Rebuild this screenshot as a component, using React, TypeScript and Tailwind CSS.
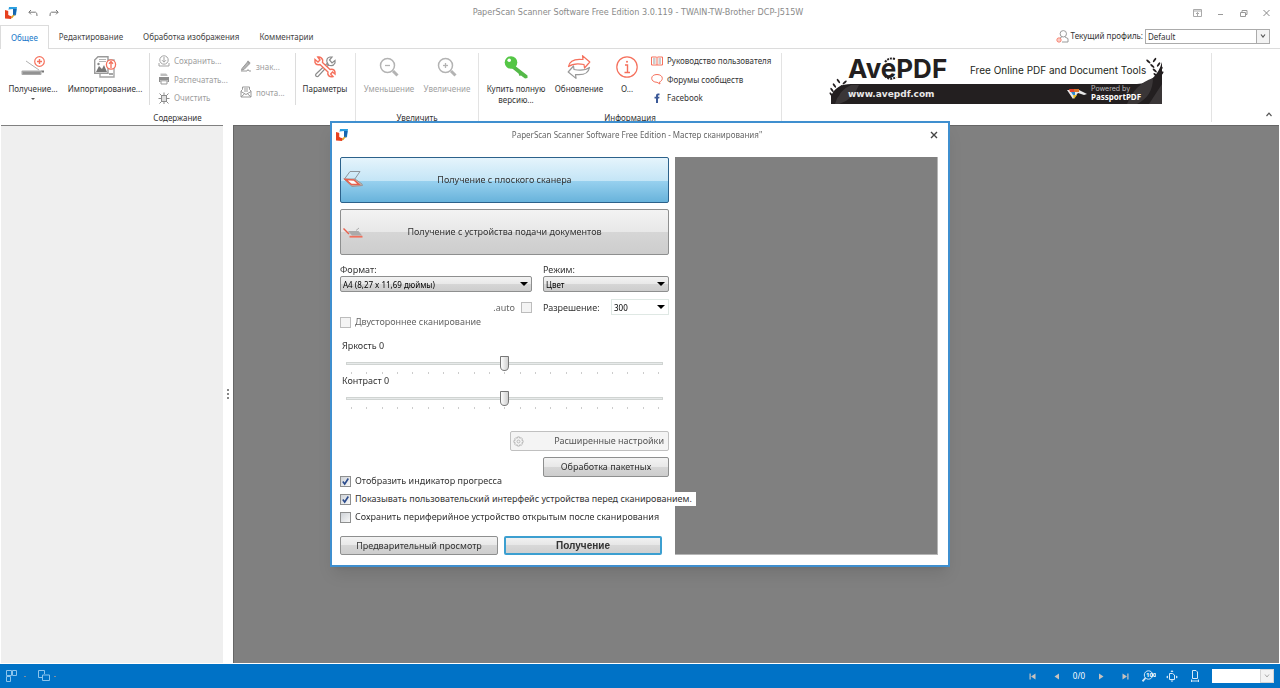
import { useState, type ReactNode } from 'react'
import clsx from 'clsx'

const tabs = ['Общее', 'Редактирование', 'Обработка изображения', 'Комментарии']

function AppLogo() {
  return (
    <svg className="size-3 shrink-0" viewBox="0 0 24 24">
      <path d="M8 0H24L22 16H17V6H7Z" fill="#2b9fe0" />
      <path d="M16 4H23L21 17H16Z" fill="#1565b0" />
      <path d="M14 17L20 15L15 22L11 23Z" fill="#d9a928" />
      <path d="M0 6L7 8V16L13 18L12 24L0 23Z" fill="#e6401f" />
      <path d="M7 5L16 4L15 15L12 18L7 16Z" fill="#fff" />
    </svg>
  )
}

function BigButton({ icon, label, disabled, arrow, className }: {
  icon: ReactNode
  label: ReactNode
  disabled?: boolean
  arrow?: boolean
  className?: string
}) {
  return (
    <button
      disabled={disabled}
      className={clsx('flex flex-col items-center gap-1 pt-[2px] text-center leading-[11px]', disabled && 'text-[#a0a0a0]', className)}
    >
      {icon}
      <span className="whitespace-nowrap">{label}</span>
      {arrow && <span className="h-0 w-0 border-x-2 border-t-2 border-x-transparent border-t-[#555]" />}
    </button>
  )
}

function SmallButton({ icon, label, disabled }: { icon: ReactNode; label: string; disabled?: boolean }) {
  return (
    <button
      disabled={disabled}
      className={clsx('flex h-[13px] items-center gap-1 whitespace-nowrap leading-[11px]', disabled && 'text-[#a0a0a0]')}
    >
      {icon}
      {label}
    </button>
  )
}

function Group({ title, width, children }: { title?: string; width: string; children?: ReactNode }) {
  return (
    <section className={clsx('flex shrink-0 flex-col justify-between border-r border-[#e3e3e3]', width)}>
      <div className="flex">{children}</div>
      {title && <h2 className="text-center leading-[8px]">{title}</h2>}
    </section>
  )
}

// Ribbon icons

const ScanIcon = () => (
  <svg className="h-6 w-6" viewBox="0 0 24 24" fill="none">
    <path d="M5 6L18 15" stroke="#b0b0b0" />
    <rect x="0.5" y="15.5" width="20" height="4.5" rx="1" fill="#a8a8a8" />
    <path d="M2 18H19" stroke="#7d7d7d" />
    <path d="M20 15.5H23V17.5H21Z" fill="#777" />
    <circle cx="18.5" cy="6.5" r="4.8" fill="#fff" stroke="#f5705c" strokeWidth="1.2" />
    <path d="M16 6.5H21M18.5 4V9" stroke="#f5705c" strokeWidth="1.4" />
  </svg>
)

const ImportIcon = () => (
  <svg className="h-6 w-6" viewBox="0 0 24 24" fill="none">
    <path d="M15 5H21V22H7V19" stroke="#a5a5a5" strokeWidth="1.4" />
    <path d="M16 20H20V18H16Z" fill="#a5a5a5" />
    <path d="M1.7 5L5 1.7H15V18.3H1.7Z" fill="#fff" stroke="#9a9a9a" strokeWidth="1.4" />
    <path d="M6 4.5H13M6 6.5H13" stroke="#b5b5b5" />
    <path d="M3 17L6 11L9 14L11 10L14 17Z" fill="#777" />
    <circle cx="5.5" cy="9" r="1.2" fill="#888" />
    <circle cx="18" cy="9.5" r="4.6" fill="#fff" stroke="#f5705c" strokeWidth="1.3" />
    <path d="M18 13V6.5M16 8.7L18 6.5L20 8.7" stroke="#f5705c" strokeWidth="1.3" />
  </svg>
)

const SaveIcon = () => (
  <svg className="h-3 w-3" viewBox="0 0 12 12" fill="none" stroke="#a3a3a3">
    <circle cx="6" cy="5" r="4.2" />
    <path d="M6 2V7M4 5.2L6 7.2L8 5.2M1 8V11H11V8" />
  </svg>
)

const PrintIcon = () => (
  <svg className="h-3 w-3" viewBox="0 0 12 12">
    <path d="M2.5 0.5H8L9.5 2V3H2.5Z" fill="#bdbdbd" />
    <path d="M1 4H11V9H9.5V7H2.5V9H1Z" fill="#8d8d8d" />
    <path d="M3 7.8H9V11H3Z" fill="none" stroke="#999" />
  </svg>
)

const ClearIcon = () => (
  <svg className="h-3 w-3" viewBox="0 0 12 12" fill="none" stroke="#8d8d8d">
    <rect x="3.5" y="3.5" width="5" height="6" fill="#ddd" />
    <path d="M6 0.5V3M1.5 1.5L3.2 3.2M10.5 1.5L8.8 3.2M0.5 6.5H3M9 6.5H11.5M1.5 11.5L3.2 9.8M10.5 11.5L8.8 9.8M6 10V12" />
  </svg>
)

const SignIcon = () => (
  <svg className="h-3 w-3" viewBox="0 0 12 12" fill="none" stroke="#9a9a9a">
    <path d="M2 8.5L7.5 2L9.5 3.8L4 9.5L1.5 10.2Z" fill="#b5b5b5" />
    <path d="M7.5 1L10 3.5" strokeWidth="1.6" />
    <path d="M1 11H7L8 9.5L9 11H11" />
  </svg>
)

const MailIcon = () => (
  <svg className="h-3 w-3" viewBox="0 0 12 12" fill="none" stroke="#999">
    <path d="M1 5L2.5 3.5V1H9.5V3.5L11 5V11H1Z" />
    <path d="M1 5.5L6 8.5L11 5.5M1 11L4.5 7.8M11 11L7.5 7.8M4 3H8M4 5H8" />
  </svg>
)

const ToolsIcon = () => (
  <svg className="h-6 w-6" viewBox="0 0 24 24" fill="none" strokeWidth="1.2">
    <path d="M3 19L14 8.5L15.5 10L5 21.5Q3 22 2.5 20Z" fill="#fff" stroke="#8c8c8c" />
    <path d="M14 7Q13 3 17 2H19L16.5 5L19 8L22 5.5V8Q20 12 15.5 10Z" fill="#fff" stroke="#8c8c8c" />
    <path d="M2 4.5L5 7L7 5L4.8 2Q8.5 1.5 9.7 5L9.5 7.5L17 14.5Q21 13.5 22 17V19L19.5 17L17.7 19L20 21.5Q16 22.5 14.8 19L15 17L7 9.5Q3 10.5 2 7.5Z" fill="#fff" stroke="#f5705c" strokeWidth="1.4" />
  </svg>
)

const ZoomIcon = ({ plus }: { plus?: boolean }) => (
  <svg className="h-6 w-6" viewBox="0 0 24 24" fill="none" stroke="#b3b3b3">
    <circle cx="10.5" cy="10.5" r="7" strokeWidth="1.5" />
    <path d="M8 10.5H13" strokeWidth="1.3" />
    {plus && <path d="M10.5 8V13" strokeWidth="1.3" />}
    <path d="M16 16L20.5 20.5" strokeWidth="3" />
  </svg>
)

const KeyIcon = () => (
  <svg className="h-6 w-6" viewBox="0 0 24 24">
    <path d="M10 10L23.5 20.5V23L21 23.5L17 20.5L15.5 21L14.5 18.5L7 12.5Z" fill="#54b948" />
    <circle cx="7" cy="7.5" r="6.3" fill="#54c645" />
    <circle cx="5.2" cy="5.2" r="1.8" fill="#fff" />
  </svg>
)

const UpdateIcon = () => (
  <svg className="h-6 w-6" viewBox="0 0 24 24" fill="none" strokeWidth="1.2" strokeLinejoin="round">
    <path d="M1.5 11.5Q3 3 16 4.5L15.5 0.7L22.8 7L17.5 13L17 9.5Q7 7.5 1.5 11.5Z" stroke="#f5705c" />
    <path d="M22.5 12.5Q21 21 8.5 19.5L9 23.4L1.2 17L6.5 11L7 14.5Q17 16.5 22.5 12.5Z" stroke="#999" />
  </svg>
)

const InfoIcon = () => (
  <svg className="h-6 w-6" viewBox="0 0 24 24" fill="none" stroke="#f5705c">
    <circle cx="12" cy="12" r="10.2" strokeWidth="1.2" />
    <path d="M10 10H12.5V17.5M9.5 17.5H15" strokeWidth="1.4" />
    <circle cx="12" cy="6.8" r="1" fill="#f5705c" stroke="none" />
  </svg>
)

const BookIcon = () => (
  <svg className="h-3 w-3" viewBox="0 0 12 12" fill="none">
    <path d="M0.5 2H5.5L6 2.5L6.5 2H11.5V10H0.5Z" fill="#fff" stroke="#f5705c" />
    <path d="M6 2.5V10" stroke="#f5705c" />
    <path d="M2 4H4.5M2 6H4.5M2 8H4.5M7.5 4H10M7.5 6H10M7.5 8H10" stroke="#999" />
  </svg>
)

const ForumIcon = () => (
  <svg className="h-3 w-3" viewBox="0 0 12 12" fill="none" stroke="#f5705c">
    <path d="M6 1.5C9.2 1.5 11.3 3.2 11.3 5.3S9.5 8.7 8.5 9L9 11L6 9.3C2.8 9.3 0.7 7.5 0.7 5.3S2.8 1.5 6 1.5Z" />
  </svg>
)

const FacebookIcon = () => (
  <svg className="h-3 w-3" viewBox="0 0 12 12">
    <path d="M5 11V6.6H3.5V4.8H5V3.6Q5 1.5 7 1.5H8.5V3.2H7.6Q7 3.2 7 3.9V4.8H8.5L8.2 6.6H7V11Z" fill="#3b5998" />
  </svg>
)

const ProfileIcon = () => (
  <svg className="h-[13px] w-[13px] shrink-0" viewBox="0 0 13 13" fill="none">
    <circle cx="7.3" cy="3.8" r="3.2" stroke="#9a9a9a" />
    <path d="M5.8 7L4 8M9 7L12 8.6V12H6" stroke="#9a9a9a" />
    <circle cx="3" cy="10" r="2.1" stroke="#f5705c" />
    <circle cx="3" cy="10" r="0.7" fill="#f5705c" />
  </svg>
)

function Leaves({ x, y, fill, flip }: { x: number; y: number; fill: string; flip?: boolean }) {
  return (
    <g transform={`translate(${x} ${y}) scale(${flip ? -1 : 1} 1)`} fill={fill}>
      {[0, 1, 2, 3].map((i) => (
        <g key={i} transform={`translate(${i * i * 0.8} ${-i * 4.5})`}>
          <ellipse cx="-2" cy="-2" rx="1" ry="2.6" transform="rotate(-35)" />
          <ellipse cx="3" cy="-2" rx="1" ry="2.6" transform="rotate(50)" />
        </g>
      ))}
    </g>
  )
}

function Banner() {
  return (
    <a href="#avepdf" className="mt-px block h-[50px] w-[331px]" aria-label="AvePDF">
      <svg className="h-full w-full overflow-visible" viewBox="0 0 331 50">
        <path d="M0 50V42Q5 30 20 30H306Q325 29 331 8V50Z" fill="#231f20" />
        <path d="M4 50Q8 36 20 31H28Q22 46 8 50ZM296 50Q304 30 322 24Q322 42 306 50ZM318 50L331 30V50Z" fill="#3a3637" />
        <Leaves x={3} y={41} fill="#231f20" />
        <Leaves x={328} y={20} fill="#231f20" flip />
        <text x="17" y="24" className="font-['Inter'] text-[26px] font-bold" fill="#231f20">AvePDF</text>
        <path d="M54 8Q58 3 64 5M54 22Q59 27 65 23" fill="none" stroke="#231f20" strokeWidth="2" strokeDasharray="2 1" />
        <text x="139" y="20" className="font-['Inter'] text-[10px]" fill="#231f20">Free Online PDF and Document Tools</text>
        <text x="17" y="43" className="font-['DejaVu_Sans'] text-[9px] font-bold" fill="#e8e8e8">www.avepdf.com</text>
        <path d="M236 36H248L256 40L253 41L247 39L242 45Z" fill="#e8e8e8" />
        <path d="M238 35H243V38H239Z" fill="#e6402b" />
        <path d="M243 35H248V38H243Z" fill="#d9732b" />
        <path d="M240 38H244V41H242Z" fill="#2f8bd0" />
        <path d="M242 41H246L243 45Z" fill="#e8c22b" />
        <text x="260" y="37" className="font-['Inter'] text-[7px]" fill="#bdbdbd">Powered by</text>
        <text x="260" y="46" className="font-['Noto_Sans'] text-[8px] font-bold" fill="#fff">PassportPDF</text>
      </svg>
    </a>
  )
}

function TitleBar() {
  return (
    <header className="flex h-[25px] items-center px-[5px] text-[#777]">
      <div className="flex flex-1 items-center gap-[11px]">
        <AppLogo />
        <button aria-label="Отменить">
          <svg className="h-[10px] w-[10px]" viewBox="0 0 10 10" fill="none" stroke="#777">
            <path d="M3 2L0.8 4.2L3 6.4M1 4.2H7.5Q9.3 4.5 9 8" />
          </svg>
        </button>
        <button aria-label="Повторить">
          <svg className="h-[10px] w-[10px]" viewBox="0 0 10 10" fill="none" stroke="#777">
            <path d="M7 2L9.2 4.2L7 6.4M9 4.2H2.5Q0.7 4.5 1 8" />
          </svg>
        </button>
      </div>
      <h1 className="font-['DejaVu_Sans_Condensed','Noto_Sans',sans-serif] text-[9px] text-[#8a8a8a]">
        PaperScan Scanner Software Free Edition 3.0.119 - TWAIN-TW-Brother DCP-J515W
      </h1>
      <div className="flex flex-1 items-center justify-end gap-[14px] pr-1">
        <button aria-label="Лента">
          <svg className="h-2 w-[9px]" viewBox="0 0 9 8" fill="none" stroke="#aaa">
            <path d="M0.5 0.5H8.5V7.5H0.5ZM0.5 2H8.5M4.5 7V3.5M3 5L4.5 3.5L6 5" />
          </svg>
        </button>
        <button aria-label="Свернуть">
          <svg className="h-2 w-[9px]" viewBox="0 0 9 8" stroke="#999"><path d="M2 5.5H7" /></svg>
        </button>
        <button aria-label="Восстановить">
          <svg className="h-2 w-[9px]" viewBox="0 0 9 8" fill="none" stroke="#999">
            <path d="M1.5 3.5H6.5V7.5H1.5ZM3 3V1.5H8V5.5H7" />
          </svg>
        </button>
        <button aria-label="Закрыть">
          <svg className="h-2 w-[9px]" viewBox="0 0 9 8" stroke="#888"><path d="M1.5 1L7.5 7M7.5 1L1.5 7" /></svg>
        </button>
      </div>
    </header>
  )
}

function Ribbon() {
  return (
    <>
      <nav className="flex h-6 items-end justify-between border-b border-[#dcdcdc] pr-[10px]">
        <div className="-mb-px flex h-6">
          {tabs.map((t, i) => (
            <button
              key={t}
              className={clsx(
                'whitespace-nowrap px-[10px]',
                i === 0 ? 'border-x border-t border-[#dcdcdc] bg-white text-[#1979ca]' : 'text-[#444]'
              )}
            >
              {t}
            </button>
          ))}
        </div>
        <div className="flex h-6 items-center gap-[2px]">
          <ProfileIcon />
          <label htmlFor="profile">Текущий профиль:</label>
          <div className="relative flex">
            <select id="profile" className="h-[15px] w-[125px] appearance-none border border-[#ababab] bg-white pl-[2px] leading-[11px]">
              <option>Default</option>
            </select>
            <span className="pointer-events-none absolute inset-y-0 right-0 flex w-[14px] items-center justify-center border border-[#ababab] bg-[#f3f3f3]">
              <svg className="h-[6px] w-[6px]" viewBox="0 0 6 6" fill="none" stroke="#555" strokeWidth="1.2"><path d="M1 1.5L3 4L5 1.5" /></svg>
            </span>
          </div>
        </div>
      </nav>
      <div className="flex h-[76px] justify-between">
        <div className="flex min-w-0 pb-[3px] pt-1">
          <Group width="w-[356px]" title="Содержание">
            <BigButton className="ml-2 w-[50px]" icon={<ScanIcon />} label="Получение..." arrow />
            <BigButton className="ml-[10px] w-[74px]" icon={<ImportIcon />} label="Импортирование..." />
            <div className="ml-[7px] flex h-[52px] w-[147px] gap-3 border-x border-[#dcdcdc] pl-2">
              <div className="flex flex-col justify-between py-px">
                <SmallButton disabled icon={<SaveIcon />} label="Сохранить..." />
                <SmallButton disabled icon={<PrintIcon />} label="Распечатать..." />
                <SmallButton disabled icon={<ClearIcon />} label="Очистить" />
              </div>
              <div className="flex flex-col justify-around">
                <SmallButton disabled icon={<SignIcon />} label="знак..." />
                <SmallButton disabled icon={<MailIcon />} label="почта..." />
              </div>
            </div>
            <BigButton className="ml-[6px] w-[46px]" icon={<ToolsIcon />} label="Параметры" />
          </Group>
          <Group width="w-[123px]" title="Увеличить">
            <BigButton disabled className="ml-[7px] w-[52px]" icon={<ZoomIcon />} label="Уменьшение" />
            <BigButton disabled className="ml-[7px] w-[50px]" icon={<ZoomIcon plus />} label="Увеличение" />
          </Group>
          <Group width="w-[303px]" title="Информация">
            <BigButton className="ml-[7px] w-[60px]" icon={<KeyIcon />} label={<>Купить полную<br />версию...</>} />
            <BigButton className="ml-2 w-[50px]" icon={<UpdateIcon />} label="Обновление" />
            <BigButton className="ml-[10px] w-[26px]" icon={<InfoIcon />} label="О..." />
            <div className="ml-[11px] flex h-[52px] flex-col justify-between py-px">
              <SmallButton icon={<BookIcon />} label="Руководство пользователя" />
              <SmallButton icon={<ForumIcon />} label="Форумы сообществ" />
              <SmallButton icon={<FacebookIcon />} label="Facebook" />
            </div>
          </Group>
          <div className="flex w-[430px] shrink-0 justify-center border-r border-[#e3e3e3]">
            <Banner />
          </div>
        </div>
        <button aria-label="Свернуть ленту" className="self-end px-2 pb-2">
          <svg className="h-[5px] w-[6px]" viewBox="0 0 6 5" fill="none" stroke="#555" strokeWidth="1.2"><path d="M0.5 4L3 1.2L5.5 4" /></svg>
        </button>
      </div>
    </>
  )
}

// Scan wizard

const glossy = 'border border-[#8e8f8f] rounded-[2px] bg-[linear-gradient(#f3f3f3,#e8e8e8_50%,#d6d6d6_50%,#cdcdcd)]'

function DropDown({ id, value, className, flat }: { id: string; value: string; className: string; flat?: boolean }) {
  return (
    <div className={clsx('relative flex', className)}>
      <select
        id={id}
        className={clsx('h-4 w-full appearance-none pl-[2px] text-[8px] leading-[11px] text-black', flat ? 'border border-[#dfe8e4] bg-white' : glossy)}
      >
        <option>{value}</option>
      </select>
      <span className="pointer-events-none absolute right-1 top-[6px] h-0 w-0 border-x-[4px] border-t-4 border-x-transparent border-t-black" />
    </div>
  )
}

function Check({ label, checked, disabled, className }: {
  label: string
  checked?: boolean
  disabled?: boolean
  className?: string
}) {
  return (
    <label className={clsx('flex h-[14px] w-max items-center gap-1 whitespace-nowrap', disabled && 'text-[#666]', className)}>
      <span className="relative flex">
        <input
          type="checkbox"
          defaultChecked={checked}
          disabled={disabled}
          className={clsx('peer size-[11px] appearance-none border bg-[#f4f4f4]', disabled ? 'border-[#bcbcbc]' : 'border-[#8e8f8f] bg-linear-to-br from-[#cfd3d8] to-[#f8f8f8]')}
        />
        <svg className="pointer-events-none absolute inset-0 hidden size-[11px] peer-checked:block" viewBox="0 0 11 11" fill="none" stroke="#2b4b8c" strokeWidth="1.6">
          <path d="M2.8 5.5L4.7 8L8.3 2.5" />
        </svg>
      </span>
      {label}
    </label>
  )
}

function Slider({ id, label }: { id: string; label: string }) {
  const [value, setValue] = useState(0)
  return (
    <div className="h-[35px] pl-[2px] pr-[6px]">
      <label htmlFor={id} className="block leading-[12px]">{label} {value}</label>
      <input
        id={id}
        type="range"
        min={-100}
        max={100}
        value={value}
        onChange={(e) => setValue(Number(e.target.value))}
        className="ml-1 mt-[3px] block h-4 w-[calc(100%-4px)] appearance-none bg-transparent [&::-webkit-slider-runnable-track]:h-[3px] [&::-webkit-slider-runnable-track]:border [&::-webkit-slider-runnable-track]:border-[#d0d4d2] [&::-webkit-slider-runnable-track]:bg-[#e7eaea] [&::-webkit-slider-thumb]:-mt-[7px] [&::-webkit-slider-thumb]:h-[15px] [&::-webkit-slider-thumb]:w-[9px] [&::-webkit-slider-thumb]:appearance-none [&::-webkit-slider-thumb]:rounded-t-[1px] [&::-webkit-slider-thumb]:rounded-b-[5px] [&::-webkit-slider-thumb]:border [&::-webkit-slider-thumb]:border-[#777] [&::-webkit-slider-thumb]:bg-linear-to-r [&::-webkit-slider-thumb]:from-[#fdfdfd] [&::-webkit-slider-thumb]:to-[#d0d0d0]"
      />
      <div className="ml-[9px] mr-1 mt-px flex justify-between">
        {Array.from({ length: 21 }, (_, i) => <span key={i} className="h-[2px] w-px bg-[#ccc]" />)}
      </div>
    </div>
  )
}

function ScanWizard() {
  return (
    <div className="fixed inset-0 flex items-center justify-center">
      <div role="dialog" aria-labelledby="wizard-title" className="w-[620px] border-2 border-[#3f8fcf] bg-white pb-[10px] text-[9px] shadow-lg">
        <div className="flex h-[23px] items-center px-[4px]">
          <div className="flex-1"><AppLogo /></div>
          <h2 id="wizard-title" className="text-[8px] text-[#666]">
            PaperScan Scanner Software Free Edition - Мастер сканирования"
          </h2>
          <div className="flex flex-1 justify-end pr-[6px]">
            <button aria-label="Закрыть">
              <svg className="size-2" viewBox="0 0 8 8" stroke="#444" strokeWidth="1.4"><path d="M1 1L7 7M7 1L1 7" /></svg>
            </button>
          </div>
        </div>

        <div className="flex gap-[6px] pl-2 pr-[10px] pt-[11px]">
          <div className="flex w-[329px] shrink-0 flex-col">
            <button className="relative h-[46px] rounded-[2px] border border-[#2c628b] bg-[linear-gradient(#e5f4fc,#c4e5f6_52%,#98d1ef_52%,#68b3db)]">
              <svg className="absolute left-[2px] top-3 h-[18px] w-5" viewBox="0 0 20 18" fill="none">
                <path d="M1.5 9L7 1.5H17L11.5 9.5" stroke="#8d959b" />
                <path d="M1 9L9 16.5L19.5 15.5L19 14L12 9Z" fill="#bbb" stroke="#999" />
                <path d="M2.5 9.5L8.5 14.5H16L11 10Z" fill="#fff" stroke="#e8604c" strokeWidth="1.6" />
              </svg>
              Получение с плоского сканера
            </button>
            <button className={clsx('relative mt-[6px] h-[46px]', glossy)}>
              <svg className="absolute left-[2px] top-[17px] h-[11px] w-5" viewBox="0 0 20 11" fill="none">
                <path d="M0.5 1.5L6 7" stroke="#e8604c" strokeWidth="1.4" />
                <path d="M5 4H15.5L19 8.5H9Z" fill="#aaa" />
                <path d="M13 3.5L16 1" stroke="#aaa" />
                <path d="M6.5 9.7H19.5" stroke="#f0705c" strokeWidth="1.8" />
              </svg>
              Получение с устройства подачи документов
            </button>

            <div className="mt-2 flex justify-between leading-[13px]">
              <div className="w-[192px]">
                <label htmlFor="format">Формат:</label>
                <DropDown id="format" value="A4 (8,27 x 11,69 дюймы)" className="w-full" />
                <div className="mt-[9px] flex justify-end gap-[6px]">
                  <label htmlFor="auto" className="text-[#666]">.auto</label>
                  <input id="auto" type="checkbox" disabled className="mt-px size-[11px] appearance-none border border-[#bcbcbc] bg-[#f4f4f4]" />
                </div>
              </div>
              <div className="w-[126px]">
                <label htmlFor="mode">Режим:</label>
                <DropDown id="mode" value="Цвет" className="w-full" />
                <div className="mt-[7px] flex items-center justify-between">
                  <label htmlFor="dpi">Разрешение:</label>
                  <DropDown id="dpi" value="300" className="w-[58px]" flat />
                </div>
              </div>
            </div>
            <Check disabled label="Двустороннее сканирование" />

            <div className="mt-[11px]">
              <Slider id="brightness" label="Яркость" />
              <Slider id="contrast" label="Контраст" />
            </div>

            <button disabled className="mt-[21px] flex h-5 w-[159px] items-center justify-between self-end rounded-[2px] border border-[#c0c0c0] bg-[#f4f4f4] pl-[2px] pr-1 text-[#555]">
              <svg className="size-[11px]" viewBox="0 0 12 12" fill="none" stroke="#b5b5b5">
                <circle cx="6" cy="6" r="1.6" />
                <path d="M5 1H7L7.4 2.5L9 1.8L10.3 3.2L9.6 4.6L11 5V7L9.6 7.4L10.3 8.9L8.9 10.2L7.4 9.5L7 11H5L4.6 9.5L3.1 10.2L1.8 8.9L2.5 7.4L1 7V5L2.5 4.6L1.8 3.1L3.1 1.8L4.6 2.5Z" />
              </svg>
              Расширенные настройки
            </button>
            <div className="mt-[6px] flex h-[31px] justify-between">
              <Check checked label="Отобразить индикатор прогресса" className="self-end" />
              <button className={clsx('h-5 w-[126px]', glossy)}>Обработка пакетных</button>
            </div>
            <Check
              checked
              label="Показывать пользовательский интерфейс устройства перед сканированием."
              className="relative mt-1 bg-white pr-1"
            />
            <Check label="Сохранить периферийное устройство открытым после сканирования" className="mt-1" />
            <div className="mt-3 flex gap-[6px]">
              <button className={clsx('h-[19px] w-[158px]', glossy)}>Предварительный просмотр</button>
              <button className="h-[19px] w-[158px] rounded-[2px] border-2 border-[#3c9fd0] bg-[linear-gradient(#f1f1f1,#e6e6e6_50%,#d8d8d8_50%,#d0d0d0)] font-['Liberation_Sans',sans-serif] text-[10px] font-bold">
                Получение
              </button>
            </div>
          </div>
          <div className="min-w-0 flex-1 border-r border-b border-[#b5b5b5] bg-[#808080]" />
        </div>
      </div>
    </div>
  )
}

function StatusBar() {
  return (
    <footer className="flex h-6 items-center justify-between bg-[#0072c6] px-[6px] text-white">
      <div className="flex items-center gap-3">
        <button aria-label="Эскизы" className="flex items-center gap-[6px]">
          <svg className="h-3 w-3" viewBox="0 0 12 12" fill="none" stroke="#8cc4ec">
            <path d="M0.5 0.5H5.5V5.5H0.5ZM6.5 0.5H10.5V5.5H6.5ZM0.5 6.5H4.5V11.5H0.5Z" />
          </svg>
          <span className="h-px w-[2px] bg-[#7f8fa0]" />
        </button>
        <button aria-label="Окна" className="flex items-center gap-[4px]">
          <svg className="h-3 w-3" viewBox="0 0 12 12" fill="none" stroke="#8cc4ec">
            <path d="M5 7.5H0.5V0.5H6.5V4M4.5 5H11.5V10.5H4.5Z" />
          </svg>
          <span className="h-px w-[2px] bg-[#7f8fa0]" />
        </button>
      </div>
      <div className="flex items-center">
        <button aria-label="Первая" className="mr-[17px]">
          <svg className="size-[7px]" viewBox="0 0 7 7" fill="#c9c2bd"><path d="M0.5 0.5H1.7V6.5H0.5ZM6.5 0.5V6.5L2 3.5Z" /></svg>
        </button>
        <button aria-label="Предыдущая" className="mr-[13px]">
          <svg className="size-[7px]" viewBox="0 0 7 7" fill="#c9c2bd"><path d="M6 0.5V6.5L1.5 3.5Z" /></svg>
        </button>
        <span className="mr-[13px]">0/0</span>
        <button aria-label="Следующая" className="mr-[17px]">
          <svg className="size-[7px]" viewBox="0 0 7 7" fill="#c9c2bd"><path d="M1 0.5V6.5L5.5 3.5Z" /></svg>
        </button>
        <button aria-label="Последняя" className="mr-[13px]">
          <svg className="size-[7px]" viewBox="0 0 7 7" fill="#c9c2bd"><path d="M5.3 0.5H6.5V6.5H5.3ZM0.5 0.5V6.5L5 3.5Z" /></svg>
        </button>
        <button aria-label="100%" className="mr-[10px]">
          <svg className="h-3 w-[14px]" viewBox="0 0 14 12" fill="none" stroke="#d5e8f7">
            <circle cx="6.5" cy="5" r="4.2" />
            <path d="M3.5 8L0.5 11.3" strokeWidth="1.8" />
            <text x="4" y="7" className="text-[6px] font-bold" fill="#fff" stroke="none">100</text>
          </svg>
        </button>
        <button aria-label="По странице" className="mr-[13px]">
          <svg className="h-3 w-3" viewBox="0 0 12 12" fill="none" stroke="#d5e8f7">
            <path d="M3.5 3.5H6.5L8.5 5V9.5H3.5Z" />
            <path d="M6 0L7.5 2H4.5ZM6 12L7.5 10.5H4.5ZM0 7L2 5.5V8.5ZM12 7L10 5.5V8.5Z" fill="#d5e8f7" stroke="none" />
          </svg>
        </button>
        <button aria-label="По ширине" className="mr-[13px]">
          <svg className="h-3 w-2" viewBox="0 0 8 12" fill="none" stroke="#d5e8f7">
            <path d="M1.5 0.5H5L6.5 2V8.5H1.5ZM0.5 11H7.5M0.5 9.5V12M7.5 9.5V12" />
          </svg>
        </button>
        <div className="relative flex">
          <select aria-label="Масштаб" className="h-[14px] w-[62px] appearance-none bg-white text-black">
            <option></option>
          </select>
          <span className="pointer-events-none absolute inset-y-0 right-0 flex w-[14px] items-center justify-center border border-[#d5d5d5] bg-[#f3f3f3]">
            <svg className="h-[6px] w-[6px]" viewBox="0 0 6 6" fill="none" stroke="#aaa"><path d="M1 1.5L3 4L5 1.5" /></svg>
          </span>
        </div>
      </div>
    </footer>
  )
}

export default function App() {
  return (
    <div className="flex min-h-screen flex-col bg-white font-['Noto_Sans','DejaVu_Sans',sans-serif] text-[8px] text-[#333]">
      <TitleBar />
      <Ribbon />
      <main className="flex flex-1 pl-px pr-px pb-px">
        <aside className="w-[222px] border-t border-[#808080] bg-[#efefef]" />
        <div className="flex w-[10px] flex-col items-center justify-center gap-[2px]">
          {[0, 1, 2].map((i) => <span key={i} className="size-[2px] bg-[#888]" />)}
        </div>
        <div className="flex-1 border-l border-t border-[#666] bg-[#808080]" />
      </main>
      <StatusBar />
      <ScanWizard />
    </div>
  )
}
